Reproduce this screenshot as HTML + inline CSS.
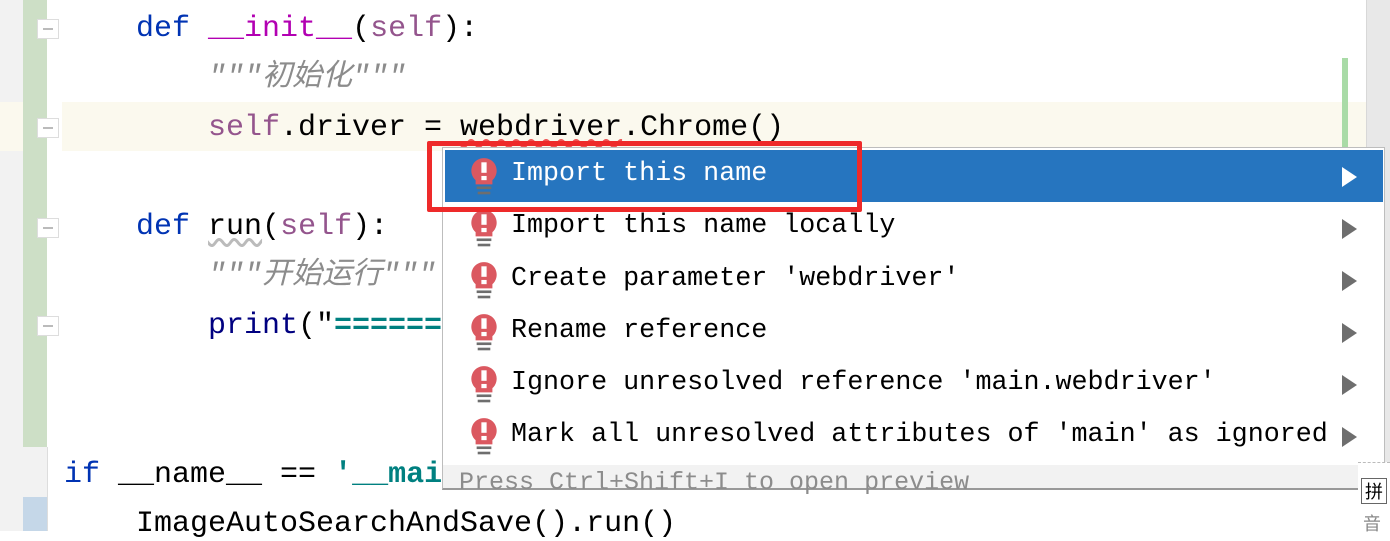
<!DOCTYPE html>
<html><head><meta charset="utf-8"><style>
body{margin:0;width:1390px;height:531px;overflow:hidden;background:#fff;position:relative;font-family:"Liberation Mono","Noto Sans CJK SC",monospace}
.a{position:absolute}
.code{position:absolute;left:0;font-size:30px;white-space:pre;line-height:30px}
.k{color:#0033b3}.m{color:#b200b2}.s{color:#94558d}.c{color:#8c8c8c;font-style:italic}.str{color:#008080;font-weight:bold}.b{color:#000080}
.fold{position:absolute;left:37px;width:20px;height:18px;background:#fff;border:1px solid #ddd}
.fold:after{content:"";position:absolute;left:5px;top:8px;width:10px;height:2px;background:#bbb}
.row{position:absolute;left:445px;width:938px;height:52px;font-size:26.7px;line-height:52px}
.row span.tx{position:absolute;left:66px;top:0}
.arr{position:absolute;left:897px;top:17px;width:0;height:0;border-left:15px solid #6e6e6e;border-top:10px solid transparent;border-bottom:10px solid transparent}
.ic{position:absolute;left:24px;top:6px}
</style></head><body>
<div class="a" style="left:0;top:0;width:23px;height:531px;background:#f2f2f2"></div>
<div class="a" style="left:23px;top:447px;width:24px;height:84px;background:#f2f2f2"></div>
<div class="a" style="left:23px;top:0;width:24px;height:447px;background:#cddfc6"></div>
<div class="a" style="left:23px;top:497px;width:24px;height:34px;background:#c5d7e8"></div>
<div class="a" style="left:47px;top:447px;width:1px;height:84px;background:#ddd"></div>
<div class="a" style="left:0;top:102px;width:23px;height:49px;background:#fbf9ee"></div>
<div class="a" style="left:62px;top:102px;width:1304px;height:49px;background:#fbf9ee"></div>
<div class="a" style="left:1366px;top:0;width:24px;height:531px;background:#e8e8e8;border-left:1px solid #d8d8d8"></div>
<div class="a" style="left:1342px;top:58px;width:6px;height:90px;background:#a9dba7"></div>
<div class="fold" style="top:19px"></div>
<div class="fold" style="top:118px"></div>
<div class="fold" style="top:218px"></div>
<div class="fold" style="top:316px"></div>

<div class="code" style="top:14px;left:136px"><span class="k">def</span> <span class="m">__init__</span>(<span class="s">self</span>):</div>
<div class="code c" style="top:63px;left:208px">"""初始化"""</div>
<div class="code" style="top:113px;left:208px"><span class="s">self</span>.driver = <span style="text-decoration:underline wavy #e55;text-underline-offset:4px">webdriver</span>.Chrome()</div>
<div class="code" style="top:212px;left:136px"><span class="k">def</span> <span style="text-decoration:underline wavy #bbb;text-underline-offset:4px">run</span>(<span class="s">self</span>):</div>
<div class="code c" style="top:261px;left:208px">"""开始运行"""</div>
<div class="code" style="top:311px;left:208px"><span class="b">print</span>("<span class="str">======</span></div>
<div class="code" style="top:460px;left:64px"><span class="k">if</span> __name__ == <span class="str">'__mai</span></div>
<div class="code" style="top:509px;left:136px">ImageAutoSearchAndSave().run()</div>

<div class="a" style="left:442px;top:147px;width:943px;height:343px;background:#fff;border:1px solid #bdbdbd;box-sizing:border-box;border-bottom:2px solid #999"></div>
<div class="row" style="top:150px;background:#2675bf;color:#fff"><svg class="ic" width="30" height="42" viewBox="0 0 28 40"><path d="M14 2a12 12 0 0 1 8 21v4H6v-4A12 12 0 0 1 14 2z" fill="#db5860"/><rect x="11.5" y="6" width="5" height="10" fill="#fff"/><rect x="11.5" y="19" width="5" height="4" fill="#fff"/><rect x="7" y="29" width="14" height="2.5" fill="#6e6e6e"/><rect x="8" y="34" width="12" height="2.5" fill="#6e6e6e"/></svg><span class="tx" style="top:-2px">Import this name</span><div class="arr" style="border-left-color:#fff"></div></div>
<div class="row" style="top:202px"><svg class="ic" width="30" height="42" viewBox="0 0 28 40"><path d="M14 2a12 12 0 0 1 8 21v4H6v-4A12 12 0 0 1 14 2z" fill="#db5860"/><rect x="11.5" y="6" width="5" height="10" fill="#fff"/><rect x="11.5" y="19" width="5" height="4" fill="#fff"/><rect x="7" y="29" width="14" height="2.5" fill="#6e6e6e"/><rect x="8" y="34" width="12" height="2.5" fill="#6e6e6e"/></svg><span class="tx" style="top:-2px">Import this name locally</span><div class="arr"></div></div>
<div class="row" style="top:254px"><svg class="ic" width="30" height="42" viewBox="0 0 28 40"><path d="M14 2a12 12 0 0 1 8 21v4H6v-4A12 12 0 0 1 14 2z" fill="#db5860"/><rect x="11.5" y="6" width="5" height="10" fill="#fff"/><rect x="11.5" y="19" width="5" height="4" fill="#fff"/><rect x="7" y="29" width="14" height="2.5" fill="#6e6e6e"/><rect x="8" y="34" width="12" height="2.5" fill="#6e6e6e"/></svg><span class="tx" style="top:-1px">Create parameter 'webdriver'</span><div class="arr"></div></div>
<div class="row" style="top:306px"><svg class="ic" width="30" height="42" viewBox="0 0 28 40"><path d="M14 2a12 12 0 0 1 8 21v4H6v-4A12 12 0 0 1 14 2z" fill="#db5860"/><rect x="11.5" y="6" width="5" height="10" fill="#fff"/><rect x="11.5" y="19" width="5" height="4" fill="#fff"/><rect x="7" y="29" width="14" height="2.5" fill="#6e6e6e"/><rect x="8" y="34" width="12" height="2.5" fill="#6e6e6e"/></svg><span class="tx" style="top:-1px">Rename reference</span><div class="arr"></div></div>
<div class="row" style="top:358px"><svg class="ic" width="30" height="42" viewBox="0 0 28 40"><path d="M14 2a12 12 0 0 1 8 21v4H6v-4A12 12 0 0 1 14 2z" fill="#db5860"/><rect x="11.5" y="6" width="5" height="10" fill="#fff"/><rect x="11.5" y="19" width="5" height="4" fill="#fff"/><rect x="7" y="29" width="14" height="2.5" fill="#6e6e6e"/><rect x="8" y="34" width="12" height="2.5" fill="#6e6e6e"/></svg><span class="tx" style="top:-1px">Ignore unresolved reference 'main.webdriver'</span><div class="arr"></div></div>
<div class="row" style="top:410px"><svg class="ic" width="30" height="42" viewBox="0 0 28 40"><path d="M14 2a12 12 0 0 1 8 21v4H6v-4A12 12 0 0 1 14 2z" fill="#db5860"/><rect x="11.5" y="6" width="5" height="10" fill="#fff"/><rect x="11.5" y="19" width="5" height="4" fill="#fff"/><rect x="7" y="29" width="14" height="2.5" fill="#6e6e6e"/><rect x="8" y="34" width="12" height="2.5" fill="#6e6e6e"/></svg><span class="tx" style="top:-1px">Mark all unresolved attributes of 'main' as ignored</span><div class="arr"></div></div>
<div class="a" style="left:443px;top:465px;width:941px;height:23px;background:#f2f2f2"></div>
<div class="a" style="left:459px;top:467px;font-size:25px;line-height:32px;color:#8c8c8c">Press Ctrl+Shift+I to open preview</div>
<div class="a" style="left:427px;top:141px;width:425px;height:61px;border:5px solid #ee2a2a;border-radius:2px"></div>
<div class="a" style="left:1358px;top:462px;width:32px;height:69px;background:#fff;border-top:1px dashed #bbb"></div>
<div class="a" style="left:1361px;top:478px;width:24px;height:24px;border:1px solid #666;font-size:18px;line-height:24px;text-align:center;font-family:'Noto Sans CJK SC',sans-serif">拼</div>
<div class="a" style="left:1363px;top:510px;font-size:18px;color:#888;font-family:'Noto Sans CJK SC',sans-serif">音</div>
</body></html>
